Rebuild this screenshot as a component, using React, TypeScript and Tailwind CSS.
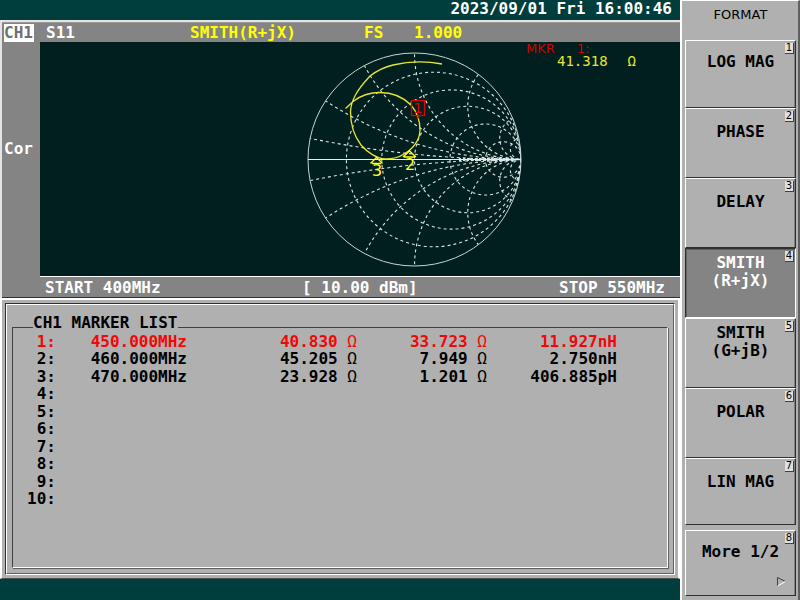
import React from "react";

type Marker = { n: number; freq?: string; r?: string; x?: string; l?: string };

const markers: Marker[] = [
  { n: 1, freq: "450.000MHz", r: "40.830", x: "33.723", l: "11.927nH" },
  { n: 2, freq: "460.000MHz", r: "45.205", x: "7.949", l: "2.750nH" },
  { n: 3, freq: "470.000MHz", r: "23.928", x: "1.201", l: "406.885pH" },
  { n: 4 },
  { n: 5 },
  { n: 6 },
  { n: 7 },
  { n: 8 },
  { n: 9 },
  { n: 10 },
];

const softKeys: string[][] = [
  ["LOG MAG"],
  ["PHASE"],
  ["DELAY"],
  ["SMITH", "(R+jX)"],
  ["SMITH", "(G+jB)"],
  ["POLAR"],
  ["LIN MAG"],
  ["More 1/2"],
];

const CX = 414.5;
const CY = 159.5;
const R = 106.5;

function SmithChart() {
  const resistances = [0.22, 0.53, 1, 2, 5];
  const reactances = [0.1, 0.3, 0.6, 1, 2, 5, 10];
  return (
    <svg
      className="h-[220px] w-[230px] shrink-0"
      viewBox="300 50 230 220"
      fill="none"
      role="img"
      aria-label="Smith chart"
    >
      <clipPath id="disc">
        <circle cx={CX} cy={CY} r={R} />
      </clipPath>
      <g clipPath="url(#disc)" stroke="#dce6e4" strokeWidth="1.1" strokeDasharray="3 3">
        {resistances.map((r) => (
          <circle key={r} cx={CX + (R * r) / (r + 1)} cy={CY} r={R / (r + 1)} />
        ))}
        {reactances.map((x) => (
          <g key={x}>
            <circle cx={CX + R} cy={CY - R / x} r={R / x} />
            <circle cx={CX + R} cy={CY + R / x} r={R / x} />
          </g>
        ))}
      </g>
      <circle cx={CX} cy={CY} r={R} stroke="#c8d4d2" />
      <path d="M308 159.5H521" stroke="#e8eeee" />
      <path d="M459 159.500H515" stroke="#dce6e4" strokeWidth="3" strokeDasharray="2 2" />
      <path
        d="M345.5 108.5L353 101.5C360 96 370 92.500 380 92.500C394 92.500 404 98 411 105C417 112 420 122 420 130C420 140 413 149 404 154C398 158 392 159 386 159C377 159 367 152 361 145C355 137 350.500 126 350.500 112C351 101 356 91 370 76C378 70 384 67 393 65C410 61 426 61 442 64"
        stroke="#e6e632"
        strokeWidth="1.3"
      />
      <g stroke="#ffff20" strokeWidth="1.4">
        <path d="M370.500 163.500L376.500 157.500L382.500 163.500M372 163.500H381" />
        <path d="M403 157L409.500 151L416 157M404 157H415" />
      </g>
      <g
        fill="#ffff20"
        fontFamily="DejaVu Sans, sans-serif"
        fontSize="16"
        fontWeight="400"
        textAnchor="middle"
      >
        <text x="377" y="176">3</text>
        <text x="410" y="170">2</text>
      </g>
      <rect x="411.500" y="100.500" width="13" height="15" stroke="#e00000" strokeWidth="1.3" />
      <path d="M416 116.500H420L418 119Z" fill="#e00000" />
      <text
        x="418"
        y="113"
        fill="#e00000"
        fontFamily="DejaVu Sans, sans-serif"
        fontSize="14"
        fontWeight="400"
        textAnchor="middle"
      >
        1
      </text>
    </svg>
  );
}

function ChannelPanel() {
  return (
    <section className="border-l-2 border-t-2 border-[#e4e4e4] bg-[#848484] text-white">
      <header className="flex h-[20px] items-center border-t border-[#9a9a9a] pl-0.5 leading-[18px]">
        <span className="w-[42px]">
          <span className="block w-[30px] bg-white text-[#707070]">CH1</span>
        </span>
        <span className="w-[144px]">S11</span>
        <span className="w-[174px] text-[#ffff00]">SMITH(R+jX)</span>
        <span className="w-[50px] text-[#ffff00]">FS</span>
        <span className="text-[#ffff00]">1.000</span>
      </header>
      <div className="flex">
        <aside className="w-[38px] shrink-0 pl-0.5 pt-[98px] leading-[18px]">Cor</aside>
        <div className="grid flex-1 grid-cols-[260px_230px_1fr] border-b border-white bg-[#001f1e] pb-[6px] pt-[8px]">
          <span />
          <SmithChart />
          <div className="-mt-2 font-['DejaVu_Sans',sans-serif] font-normal">
            <div className="-ml-1 flex gap-[22px] text-[13px] leading-[13px] text-[#d00000]">
              <span>MKR</span>
              <span>1:</span>
            </div>
            <div className="flex gap-[20px] pl-[27px] font-['DejaVu_Sans_Mono',monospace] text-[14px] leading-[13px] text-[#e6e632]">
              <span>41.318</span>
              <span>Ω</span>
            </div>
          </div>
        </div>
      </div>
      <footer className="flex h-[21px] items-end justify-between border-b border-[#303030] pl-[43px] pr-[15px] leading-[18px]">
        <span>START 400MHz</span>
        <span>[ 10.00 dBm]</span>
        <span>STOP 550MHz</span>
      </footer>
    </section>
  );
}

function MarkerList() {
  return (
    <section className="flex flex-1 flex-col border-2 border-b border-white border-b-[#505050] bg-[#b0b0b0] p-[3px] text-black">
      <div className="flex flex-1 flex-col border border-[#303030] border-b-white border-r-white">
        <div className="flex flex-1 flex-col border border-white border-b-[#606060] border-r-[#606060] px-[5px] pb-[5px] pt-[17px]">
          <fieldset className="min-w-0 flex-1 border border-[#404040] border-b-white border-r-white pb-0 shadow-[1px_1px_0_#606060]">
            <legend className="ml-[20px] h-[10px] leading-[2px]">CH1 MARKER LIST</legend>
            <table className="w-[604px] table-fixed text-right leading-[17px]">
              <colgroup>
                <col className="w-[43px]" />
                <col className="w-[131px]" />
                <col className="w-[170px]" />
                <col className="w-[130px]" />
                <col className="w-[130px]" />
              </colgroup>
              <tbody>
                {markers.map((m) => (
                  <tr
                    key={m.n}
                    className={
                      m.n === 1
                        ? "odd:h-[18px] even:h-[17px] text-[#f00808]"
                        : "odd:h-[18px] even:h-[17px]"
                    }
                  >
                    <th scope="row" className="p-0 text-right font-bold">{m.n}:</th>
                    <td className="p-0">{m.freq}</td>
                    <td className="p-0">
                      {m.r && <>{m.r} <span className="font-normal">Ω</span></>}
                    </td>
                    <td className="p-0">
                      {m.x && <>{m.x} <span className="font-normal">Ω</span></>}
                    </td>
                    <td className="p-0">{m.l}</td>
                  </tr>
                ))}
              </tbody>
            </table>
          </fieldset>
        </div>
      </div>
    </section>
  );
}

function SoftKey({ lines, index }: { lines: string[]; index: number }) {
  const selected = index === 3;
  const last = index === 7;
  return (
    <button
      type="button"
      aria-pressed={selected}
      className={
        "relative flex h-[70px] flex-col items-center border px-0 pt-[5px] first:h-[68px] first:pt-[3px] nth-7:h-[67px] last:mt-[5px] last:h-[66px] last:pt-[3px] " +
        (selected
          ? "border-[#303030] border-b-white border-r-white bg-[#848484] text-white shadow-[inset_1px_1px_0_#606060]"
          : "border-white border-b-[#303030] border-r-[#303030] bg-[#b0b0b0] text-black shadow-[inset_-1px_0_0_#808080]")
      }
    >
      <span className="flex h-[36px] flex-col justify-center leading-[18px]">
        {lines.map((line) => (
          <span key={line}>{line}</span>
        ))}
      </span>
      <span className="absolute right-px top-[2px] h-[11px] w-[9px] border-b border-r border-[#404040] bg-[#e0e0e0] text-center font-['DejaVu_Sans',sans-serif] text-[10px] font-normal leading-[10px] text-black">
        {index + 1}
      </span>
      {last && (
        <svg className="absolute bottom-[8px] right-[8px] size-[11px]" viewBox="0 0 11 11" fill="none">
          <path d="M1.500 10V1.500L9.500 5.500" stroke="#404040" />
          <path d="M1.500 10L9.500 5.500" stroke="#ffffff" />
        </svg>
      )}
    </button>
  );
}

export default function App() {
  return (
    <div className="grid min-h-screen grid-cols-[1fr_120px] bg-[#003e3e] font-['DejaVu_Sans_Mono',monospace] text-[16px] font-bold">
      <main className="flex min-w-0 flex-col pb-[21px]">
        <div className="h-[20px] pr-[8px] text-right leading-[18px] text-white">
          <time dateTime="2023-09-01T16:00:46">2023/09/01 Fri 16:00:46</time>
        </div>
        <ChannelPanel />
        <MarkerList />
      </main>
      <nav
        aria-label="Format"
        className="flex flex-col border-l-2 border-r-2 border-t border-white border-r-[#606060] bg-[#b0b0b0] pl-[3px] pr-[2px]"
      >
        <h1 className="h-[39px] pt-[5px] text-center font-['DejaVu_Sans',sans-serif] text-[13px] font-normal leading-[18px] text-black">
          FORMAT
        </h1>
        <div className="flex flex-col">
          {softKeys.map((lines, i) => (
            <SoftKey key={i} lines={lines} index={i} />
          ))}
        </div>
      </nav>
    </div>
  );
}
